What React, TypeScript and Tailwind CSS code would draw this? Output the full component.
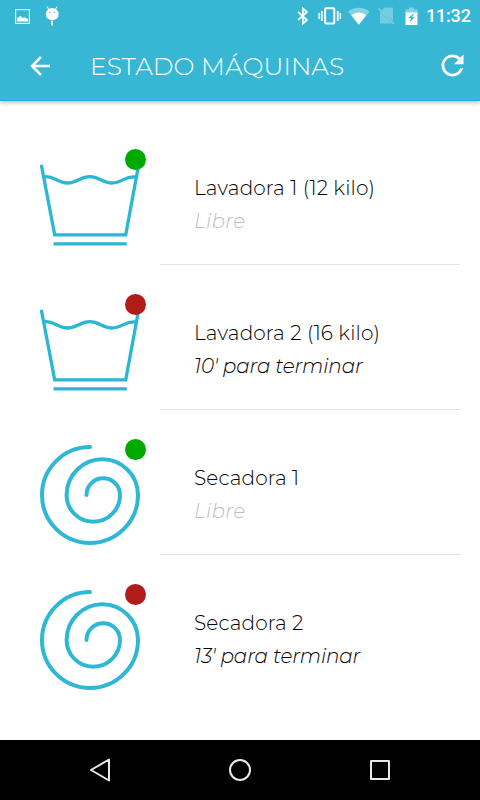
import React from "react";

type Machine = {
  name: string;
  kind: "washer" | "dryer";
  minutes?: number;
};

const machines: Machine[] = [
  { name: "Lavadora 1 (12 kilo)", kind: "washer" },
  { name: "Lavadora 2 (16 kilo)", kind: "washer", minutes: 10 },
  { name: "Secadora 1", kind: "dryer" },
  { name: "Secadora 2", kind: "dryer", minutes: 13 },
];

function StatusBar() {
  return (
    <div className="flex h-8 items-center text-white">
      <svg className="ml-[15px] h-[15px] w-[15px]" viewBox="0 0 15 15" fill="none">
        <rect x="0.6" y="0.6" width="13.8" height="13.8" stroke="currentColor" strokeWidth="1.2" opacity="0.85" />
        <path d="M2 12.5V9l2-1 1.5-1.2L7.5 9l2-.7L13 10v2.5z" fill="currentColor" />
      </svg>
      <svg className="ml-[15px] h-5 w-[14px]" viewBox="0 0 14 20">
        <path d="M2.2 .5 4 4M12 .5l-1.8 3.5" stroke="white" strokeWidth="1" />
        <ellipse cx="7.2" cy="8.2" rx="6.4" ry="6.2" fill="white" />
        <circle cx="4.8" cy="6.4" r="0.7" fill="#37b7d4" />
        <circle cx="9.8" cy="6.4" r="0.7" fill="#37b7d4" />
        <path d="M6.3 15h1.7v4.5H6.3z" fill="white" />
      </svg>
      <svg className="ml-[238px] h-[18px] w-3" viewBox="0 0 12 18" fill="none" stroke="currentColor" strokeWidth="1.7">
        <path d="M1 4.8 10 13l-4.1 3.7V1.3L10 5l-9 8.2" />
      </svg>
      <svg className="ml-[9px] h-[18px] w-6" viewBox="0 0 24 18" fill="none" stroke="currentColor">
        <rect x="7.1" y="1.3" width="9.2" height="15.2" rx="1" strokeWidth="2" />
        <path d="M3.8 4v10M19.7 4v10" strokeWidth="1.8" />
        <path d="M1.2 6v6M22.3 6v6" strokeWidth="1.6" />
      </svg>
      <svg className="ml-[6px] h-[18px] w-[22px]" viewBox="0 0 22 18">
        <path d="M0 4.5C6.4-.5 15.2-.5 21.5 4.5L10.8 17.7z" fill="white" opacity=".38" />
        <path d="M3.4 8.2c4.7-3.5 10.3-3.5 14.8 0l-7.4 9.5z" fill="white" />
      </svg>
      <svg className="ml-2 h-[18px] w-[17px]" viewBox="0 0 17 18">
        <path d="M6.5 .5H15v13.5L3.5 3.5zM2 4.5 14 16.5H2z" fill="white" opacity=".3" />
        <path d="m.5 1.5 15.5 15.5" stroke="white" strokeWidth="1.4" opacity=".4" />
      </svg>
      <svg className="ml-[10px] h-[19px] w-[13px]" viewBox="0 0 13 19">
        <path d="M4 .5h5v2h3.5v4H.5v-4H4z" fill="white" opacity=".38" />
        <path d="M.5 5.5h12V18H.5z" fill="white" />
        <path d="M9.7 5.5 3.2 11h3l-2 4.7 5.5-5.7H7z" fill="#37b7d4" />
      </svg>
      <span className="ml-[8px] font-[Roboto,sans-serif] text-[18px] leading-none font-medium tracking-[-0.2px]">11:32</span>
    </div>
  );
}

function Header() {
  return (
    <header className="relative h-[101px] shrink-0 border-b border-[#16b3d2] bg-[#37b7d4] text-white shadow-[0_2px_4px_rgba(0,0,0,0.25)]">
      <StatusBar />
      <div className="flex h-[68px] items-center">
        <svg className="ml-[30px] h-5 w-5" viewBox="0 0 20 20" fill="none" stroke="currentColor" strokeWidth="2.5">
          <path d="M20 10H2M11 1l-9 9 9 9" />
        </svg>
        <h1 className="ml-[40px] w-[260px] text-[25px] leading-8 font-light tracking-[0.08px] whitespace-nowrap">
          ESTADO MÁQUINAS
        </h1>
        <svg className="relative -top-px ml-[86px] h-[33px] w-[33px] shrink-0" viewBox="0 0 24 24" fill="currentColor">
          <path d="M17.65 6.35A7.96 7.96 0 0 0 12 4a8 8 0 1 0 7.73 10h-2.08A6 6 0 1 1 12 6c1.66 0 3.14.69 4.22 1.78L13 11h7V4z" />
        </svg>
      </div>
    </header>
  );
}

function WasherIcon() {
  return (
    <svg className="h-[100px] w-[100px]" viewBox="0 0 100 100" fill="none" stroke="#2bb6d4" strokeWidth="3.3">
      <path d="M1.3 9.8 14.7 79.8h71L98.7 9.8M13.5 88.9h73.3" />
      <path d="M3.5 22C13 19.5 17 28 27.3 28S40 21.7 49.7 21.7 62 28 72 28s13-7.5 24-6" />
    </svg>
  );
}

function DryerIcon() {
  return (
    <svg className="h-[100px] w-[100px]" viewBox="0 0 100 100" fill="none" stroke="#2fb7d5" strokeWidth="4" strokeLinecap="round">
      <path d="M50 2A48 48 0 1 0 98 50A35.7 35.7 0 1 0 26.6 50A26.7 26.7 0 0 0 80 50A16.75 16.75 0 0 0 46.5 50" />
    </svg>
  );
}

function MachineRow({ machine, last }: { machine: Machine; last: boolean }) {
  const busy = machine.minutes !== undefined;
  return (
    <li className="flex h-[145px]">
      <div className="relative ml-10 h-[135px] w-[120px] pt-[35px]">
        {machine.kind === "washer" ? <WasherIcon /> : <DryerIcon />}
        <span className={`absolute top-[29px] left-[85px] h-[21px] w-[21px] rounded-full ${busy ? "bg-[#b01c17]" : "bg-[#00a900]"}`} />
      </div>
      <div className={`w-[300px] pl-[34px] text-[20px] leading-[33px] font-light ${last ? "pt-[52px]" : "border-b border-[#e4e4e4] pt-[51.5px]"}`}>
        <p className="tracking-[0.15px] whitespace-nowrap text-black">{machine.name}</p>
        <p className={`whitespace-nowrap italic ${busy ? "tracking-[-0.15px] text-black" : "tracking-[0.3px] text-[#c0c0c0]"}`}>
          {busy ? `${machine.minutes}' para terminar` : "Libre"}
        </p>
      </div>
    </li>
  );
}

function NavigationBar() {
  return (
    <nav className="flex h-[60px] items-center justify-between bg-black px-[88px]">
      <svg className="h-6 w-6" viewBox="0 0 24 24" fill="none" stroke="#e8e8e8" strokeWidth="2" strokeLinejoin="round">
        <path d="M21 1.5v21L3 12z" />
      </svg>
      <svg className="h-6 w-6" viewBox="0 0 24 24" fill="none" stroke="#e8e8e8" strokeWidth="2">
        <circle cx="12" cy="12" r="10" />
      </svg>
      <svg className="h-6 w-6" viewBox="0 0 24 24" fill="none" stroke="#e8e8e8" strokeWidth="2" strokeLinejoin="round">
        <rect x="3" y="3" width="18" height="18" />
      </svg>
    </nav>
  );
}

export default function App() {
  return (
    <div className="flex h-[800px] w-[480px] flex-col overflow-hidden bg-white font-[Montserrat,Inter,sans-serif]">
      <Header />
      <main className="flex-1 pt-[19px]">
        <ul>
          {machines.map((machine, i) => (
            <MachineRow key={machine.name} machine={machine} last={i === machines.length - 1} />
          ))}
        </ul>
      </main>
      <NavigationBar />
    </div>
  );
}
